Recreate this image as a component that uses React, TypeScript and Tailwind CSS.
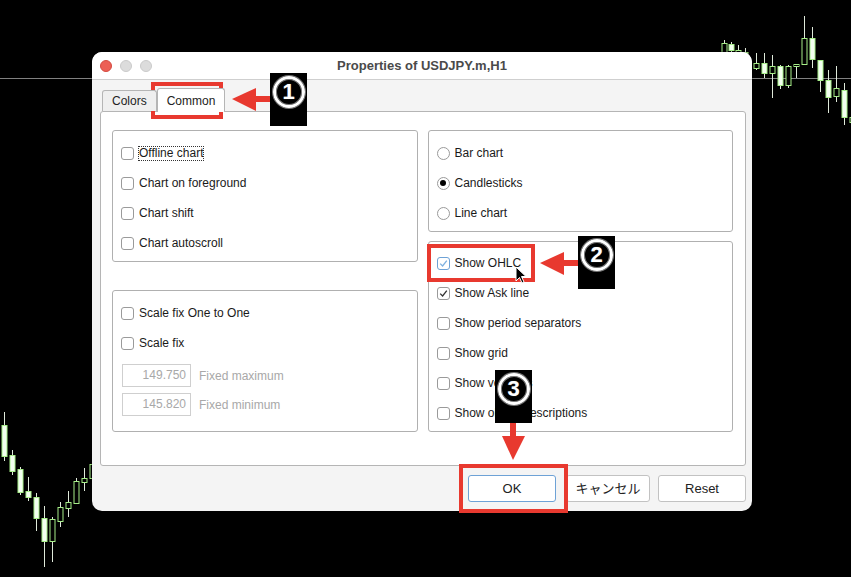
import React from 'react';

type Candle = [number, number, number, number, number, boolean];

const candles: Candle[] = [
  [724, 40, 60, 43, 52, false],
  [731, 42, 60, 44, 50, true],
  [738, 45, 65, 50, 58, false],
  [745, 48, 70, 52, 60, true],
  [756, 53, 70, 63, 68, false],
  [764, 53, 78, 63, 73, true],
  [772, 55, 98, 66, 73, false],
  [780, 65, 89, 66, 85, true],
  [788, 65, 88, 66, 85, false],
  [796, 64, 78, 64, 66, false],
  [804, 16, 64, 38, 64, false],
  [812, 27, 68, 38, 59, true],
  [820, 60, 92, 60, 80, true],
  [828, 70, 113, 80, 97, true],
  [836, 66, 102, 88, 96, false],
  [844, 83, 125, 90, 117, true],
  [852, 110, 130, 117, 122, false],
  [4, 412, 461, 425, 456, true],
  [12, 450, 475, 455, 471, true],
  [20, 467, 495, 469, 492, true],
  [28, 477, 501, 491, 497, true],
  [36, 493, 531, 497, 518, true],
  [44, 506, 567, 518, 541, true],
  [52, 517, 562, 519, 541, false],
  [60, 502, 527, 507, 521, false],
  [68, 491, 517, 502, 508, false],
  [76, 478, 503, 481, 503, false],
  [84, 468, 491, 478, 482, false],
  [92, 455, 480, 464, 478, false],
];

function Chart() {
  return (
    <svg className="absolute inset-0" width="851" height="577" viewBox="0 0 851 577">
      <line x1="0" y1="78.5" x2="851" y2="78.5" stroke="#808080" strokeWidth="1" />
      {candles.map(([x, wt, wb, bt, bb, filled], i) => (
        <g key={i}>
          <line x1={x + 0.5} y1={wt} x2={x + 0.5} y2={wb} stroke="#dfe9da" strokeWidth="1" />
          <rect
            x={x - 2}
            y={bt + 0.5}
            width="5"
            height={Math.max(bb - bt, 2)}
            fill={filled ? '#f3fff0' : '#000'}
            stroke="#a6ee88"
            strokeWidth="1"
          />
        </g>
      ))}
    </svg>
  );
}

function Check({ checked = false, focus = false }: { checked?: boolean; focus?: boolean }) {
  return (
    <span
      className={`relative w-[13px] h-[13px] rounded-[3px] border bg-white shrink-0 ${
        focus ? 'border-[#6ea2d6]' : 'border-[#9a9a9a]'
      }`}
    >
      {checked && (
        <svg className="absolute left-[1px] top-[1px]" width="9" height="9" viewBox="0 0 9 9">
          <path
            d="M1.2 4.6 L3.6 7 L7.8 1.6"
            fill="none"
            stroke={focus ? '#7fb1e0' : '#333'}
            strokeWidth="1.3"
          />
        </svg>
      )}
    </span>
  );
}

function Radio({ checked = false }: { checked?: boolean }) {
  return (
    <span className="w-[13px] h-[13px] rounded-full border border-[#9a9a9a] bg-white shrink-0 flex items-center justify-center">
      {checked && <span className="w-[6px] h-[6px] rounded-full bg-black" />}
    </span>
  );
}

function Row({ children, label, dotted = false }: { children: React.ReactNode; label: string; dotted?: boolean }) {
  return (
    <div className="h-[30px] flex items-center gap-[5px] pl-[8px]">
      {children}
      <span className={dotted ? 'outline-1 outline-dotted outline-[#333] leading-[13px]' : ''}>{label}</span>
    </div>
  );
}

function NumInput({ value, label }: { value: string; label: string }) {
  return (
    <div className="flex items-center gap-[8px] pl-[9px]">
      <div className="w-[69px] h-[23px] border border-[#cfcfcf] bg-white text-right pr-[4px] leading-[21px] text-[#a8a8a8]">
        {value}
      </div>
      <span className="text-[#a8a8a8]">{label}</span>
    </div>
  );
}

// black tag with a circled step number
function Badge({ n, className }: { n: string; className: string }) {
  return (
    <div className={`absolute w-[37px] h-[53px] bg-black flex justify-center pt-[3px] ${className}`}>
      <div className="w-[32px] h-[32px] rounded-full border-[3px] border-white shadow-[0_0_0_1px_#777,inset_0_0_0_1px_#777] flex items-center justify-center">
        <span className="text-white text-[22px] leading-none font-bold [text-shadow:0_0_1px_#777]">{n}</span>
      </div>
    </div>
  );
}

function Btn({ children, primary = false, w }: { children: React.ReactNode; primary?: boolean; w: string }) {
  return (
    <div
      className={`${w} h-[27px] rounded-[3px] border bg-white flex items-center justify-center text-[13px] text-[#222] ${
        primary ? 'border-[#6ea2d6]' : 'border-[#c2c2c2]'
      }`}
    >
      {children}
    </div>
  );
}

export default function App() {
  return (
    <div
      className="relative w-[851px] h-[577px] bg-black overflow-hidden text-[12px] text-[#1a1a1a]"
      style={{ fontFamily: '"Liberation Sans", "Noto Sans CJK JP", sans-serif' }}
    >
      <Chart />

      {/* dialog window */}
      <div className="absolute left-[92px] top-[52px] w-[660px] h-[459px] rounded-[10px] bg-[#f4f4f4] overflow-hidden flex flex-col shadow-[0_0_0_1px_rgba(0,0,0,0.2)]">
        <div className="relative h-[28px] bg-white border-b border-[#cfcfcf] flex items-center justify-center">
          <div className="absolute left-[8px] top-[8px] flex gap-[8px]">
            <span className="w-[12px] h-[12px] rounded-full bg-[#ec5f55] border border-[#d44a40]" />
            <span className="w-[12px] h-[12px] rounded-full bg-[#dcdcdc] border border-[#cacaca]" />
            <span className="w-[12px] h-[12px] rounded-full bg-[#dcdcdc] border border-[#cacaca]" />
          </div>
          <span className="text-[13px] font-bold text-[#4a4a4a]">Properties of USDJPY.m,H1</span>
        </div>

        <div className="flex-1 flex flex-col pt-[10px] pl-[8px] pr-[6px]">
          {/* tabs */}
          <div className="flex items-end h-[21px] pl-[2px] relative z-10">
            <div className="h-[21px] px-[9px] border border-[#b5b5b5] border-b-0 rounded-t-[3px] bg-[#efefef] flex items-center text-[#222]">
              Colors
            </div>
            <div className="h-[24px] px-[9px] border border-[#b5b5b5] border-b-0 rounded-t-[3px] bg-white flex items-center -mb-[1px] text-[#222]">
              Common
            </div>
          </div>

          {/* panel */}
          <div className="h-[355px] border border-[#b5b5b5] rounded-[3px] bg-white pt-[18px] pl-[11px] pr-[12px] grid grid-cols-2 gap-x-[10px]">
            <div className="flex flex-col gap-[28px]">
              <div className="h-[132px] border border-[#b0b0b0] rounded-[3px] pt-[7px]">
                <Row label="Offline chart" dotted>
                  <Check />
                </Row>
                <Row label="Chart on foreground">
                  <Check />
                </Row>
                <Row label="Chart shift">
                  <Check />
                </Row>
                <Row label="Chart autoscroll">
                  <Check />
                </Row>
              </div>
              <div className="h-[142px] border border-[#b0b0b0] rounded-[3px] pt-[7px]">
                <Row label="Scale fix One to One">
                  <Check />
                </Row>
                <Row label="Scale fix">
                  <Check />
                </Row>
                <div className="mt-[6px] flex flex-col gap-[6px]">
                  <NumInput value="149.750" label="Fixed maximum" />
                  <NumInput value="145.820" label="Fixed minimum" />
                </div>
              </div>
            </div>
            <div className="flex flex-col gap-[9px]">
              <div className="h-[102px] border border-[#b0b0b0] rounded-[3px] pt-[7px]">
                <Row label="Bar chart">
                  <Radio />
                </Row>
                <Row label="Candlesticks">
                  <Radio checked />
                </Row>
                <Row label="Line chart">
                  <Radio />
                </Row>
              </div>
              <div className="h-[191px] border border-[#b0b0b0] rounded-[3px] pt-[6px]">
                <Row label="Show OHLC">
                  <Check checked focus />
                </Row>
                <Row label="Show Ask line">
                  <Check checked />
                </Row>
                <Row label="Show period separators">
                  <Check />
                </Row>
                <Row label="Show grid">
                  <Check />
                </Row>
                <Row label="Show volumes">
                  <Check />
                </Row>
                <Row label="Show object descriptions">
                  <Check />
                </Row>
              </div>
            </div>
          </div>

          {/* buttons */}
          <div className="mt-[9px] flex justify-end">
            <Btn primary w="w-[88px]">OK</Btn>
            <div className="ml-[10px]">
              <Btn w="w-[84px]">キャンセル</Btn>
            </div>
            <div className="ml-[8px]">
              <Btn w="w-[88px]">Reset</Btn>
            </div>
          </div>
        </div>
      </div>

      {/* annotations */}
      <div className="absolute left-[151px] top-[82px] w-[72px] h-[37px] border-[4px] border-[#e8392f]" />
      <div className="absolute left-[427px] top-[244px] w-[108px] h-[38px] border-[4px] border-[#e8392f]" />
      <div className="absolute left-[459px] top-[464px] w-[109px] h-[49px] border-[4px] border-[#e8392f]" />

      <svg className="absolute inset-0 pointer-events-none" width="851" height="577" viewBox="0 0 851 577">
        {/* arrow 1 */}
        <rect x="252" y="96" width="19" height="6" fill="#e8392f" />
        <polygon points="232,99 256,88 256,111" fill="#e8392f" />
        {/* arrow 2 */}
        <rect x="560" y="260" width="19" height="6" fill="#e8392f" />
        <polygon points="540,263 564,252 564,275" fill="#e8392f" />
        {/* arrow 3 */}
        <rect x="510" y="422" width="6" height="17" fill="#e8392f" />
        <polygon points="502,436 525,436 513,460" fill="#e8392f" />
        {/* cursor */}
        <path d="M516 267 L516 281 L519.5 277.5 L522 283 L524 282 L521.5 276.5 L526 276.5 Z" fill="#000" stroke="#fff" strokeWidth="1" />
      </svg>

      <Badge n="1" className="left-[270px] top-[73px]" />
      <Badge n="2" className="left-[578px] top-[236px]" />
      <Badge n="3" className="left-[495px] top-[370px]" />
    </div>
  );
}
